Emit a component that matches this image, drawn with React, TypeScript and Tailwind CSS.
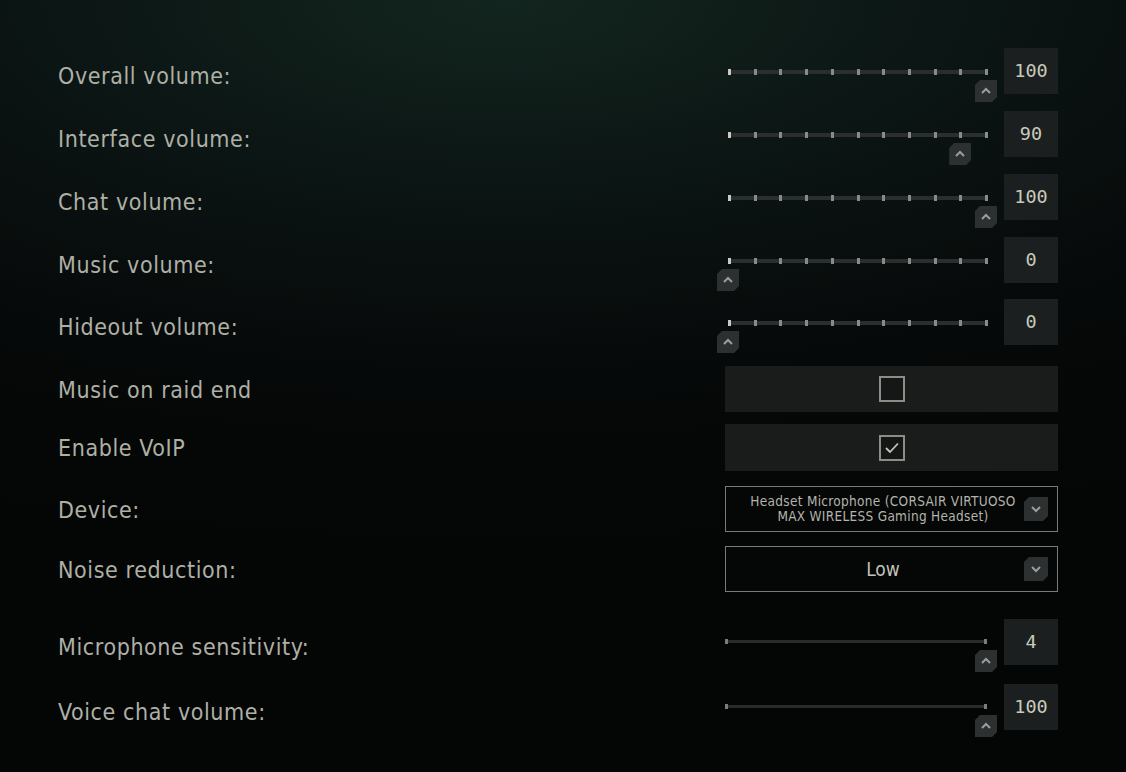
import React from 'react';

const LABEL = "font-['DejaVu_Sans_Condensed',sans-serif] text-[23px] tracking-[0.6px] text-[#aeb0a6]";
const VALUE = "font-['DejaVu_Sans_Mono',monospace] text-[18.5px] text-[#c9cabd]";
const CHAMFER = '[clip-path:polygon(5px_0,100%_0,100%_calc(100%-5px),calc(100%-5px)_100%,0_100%,0_5px)]';

function Chevron({ down }: { down?: boolean }) {
  return (
    <svg width="12" height="8" viewBox="0 0 12 8" className="block">
      <path
        d={down ? 'M2 2 L6 6 L10 2' : 'M2 6 L6 2 L10 6'}
        fill="none"
        stroke="#9c9e98"
        strokeWidth="2"
      />
    </svg>
  );
}

function Thumb({ left, top }: { left: number; top: number }) {
  return (
    <div
      className={`absolute flex h-[22px] w-[22px] items-center justify-center bg-[#2c3030] ${CHAMFER}`}
      style={{ left: left - 11, top }}
    >
      <Chevron />
    </div>
  );
}

function TickSlider({ value }: { value: number }) {
  const ticks = Array.from({ length: 11 }, (_, i) => i);
  return (
    <div className="relative h-[54px] w-[279px]">
      <div className="absolute left-[3px] top-[22px] h-[4px] w-[260px] bg-[#2a2e2e]">
        {ticks.map((i) => (
          <div
            key={i}
            className={`absolute top-[-1px] h-[6px] w-[3px] ${i === 0 ? 'bg-[#c9cac2]' : 'bg-[#888b86]'}`}
            style={{ left: i * 25.7 }}
          />
        ))}
      </div>
      <Thumb left={3 + (value / 100) * 258} top={32} />
    </div>
  );
}

function PlainSlider() {
  return (
    <div className="relative h-[55px] w-[279px]">
      <div className="absolute left-0 top-[21px] h-[3px] w-[262px] bg-[#282b2b]">
        <div className="absolute left-0 top-[-1px] h-[5px] w-[3px] bg-[#7a7c7c]" />
        <div className="absolute right-0 top-[-1px] h-[5px] w-[3px] bg-[#7a7c7c]" />
      </div>
      <Thumb left={261} top={31} />
    </div>
  );
}

function ValueBox({ v }: { v: string }) {
  return (
    <div className={`flex h-[46px] w-[54px] items-center justify-center bg-[#1c1f1f] ${VALUE}`}>{v}</div>
  );
}

function Row({ label, top, h, children }: { label: string; top: number; h: number; children: React.ReactNode }) {
  return (
    <div className="flex items-center" style={{ marginTop: top, height: h }}>
      <div className={`w-[725px] shrink-0 pl-[58px] pt-[2px] ${LABEL}`}>{label}</div>
      <div className="flex h-full w-[333px] shrink-0 items-start">{children}</div>
    </div>
  );
}

function SliderRow({ label, top, value, plain }: { label: string; top: number; value: number; plain?: boolean }) {
  return (
    <Row label={label} top={top} h={plain ? 55 : 54}>
      {plain ? <PlainSlider /> : <TickSlider value={value} />}
      <ValueBox v={String(value)} />
    </Row>
  );
}

function CheckPanel({ checked }: { checked?: boolean }) {
  return (
    <div className="flex h-full w-full items-center justify-center bg-[#1a1c1c]">
      <div className="flex h-[26px] w-[26px] items-center justify-center border-2 border-[#8c8d85] bg-[#151717]">
        {checked && (
          <svg width="16" height="12" viewBox="0 0 16 12">
            <path d="M2 6 L6 10 L14 1.5" fill="none" stroke="#c4c5bb" strokeWidth="1.8" />
          </svg>
        )}
      </div>
    </div>
  );
}

function Dropdown({ children }: { children: React.ReactNode }) {
  return (
    <div className="flex h-full w-full items-center border border-[#77797a] bg-[#050606] pr-[9px]">
      <div className="flex flex-1 justify-center pl-[20px]">{children}</div>
      <div className={`ml-[4px] flex h-[24px] w-[24px] items-center justify-center bg-[#2c3030] ${CHAMFER}`}>
        <Chevron down />
      </div>
    </div>
  );
}

export default function App() {
  return (
    <div className="relative h-[772px] w-[1126px] overflow-hidden bg-[radial-gradient(ellipse_120%_70%_at_45%_0%,#13251f_0%,#0b1513_35%,#070a0a_65%,#040505_100%)]">
      <div className="flex flex-col">
        <SliderRow label="Overall volume:" top={48} value={100} />
        <SliderRow label="Interface volume:" top={9} value={90} />
        <SliderRow label="Chat volume:" top={9} value={100} />
        <SliderRow label="Music volume:" top={9} value={0} />
        <SliderRow label="Hideout volume:" top={8} value={0} />
        <Row label="Music on raid end" top={13} h={46}>
          <CheckPanel />
        </Row>
        <Row label="Enable VoIP" top={12} h={47}>
          <CheckPanel checked />
        </Row>
        <Row label="Device:" top={15} h={46}>
          <Dropdown>
            <div className="text-center font-['DejaVu_Sans_Condensed',sans-serif] text-[13.5px] leading-[15px] tracking-[0.3px] text-[#b3b4ab]">
              Headset Microphone (CORSAIR VIRTUOSO
              <br />
              MAX WIRELESS Gaming Headset)
            </div>
          </Dropdown>
        </Row>
        <Row label="Noise reduction:" top={14} h={46}>
          <Dropdown>
            <div className="font-['DejaVu_Sans_Condensed',sans-serif] text-[19px] text-[#c2c3b9]">Low</div>
          </Dropdown>
        </Row>
        <SliderRow label="Microphone sensitivity:" top={27} value={4} plain />
        <SliderRow label="Voice chat volume:" top={10} value={100} plain />
      </div>
    </div>
  );
}
